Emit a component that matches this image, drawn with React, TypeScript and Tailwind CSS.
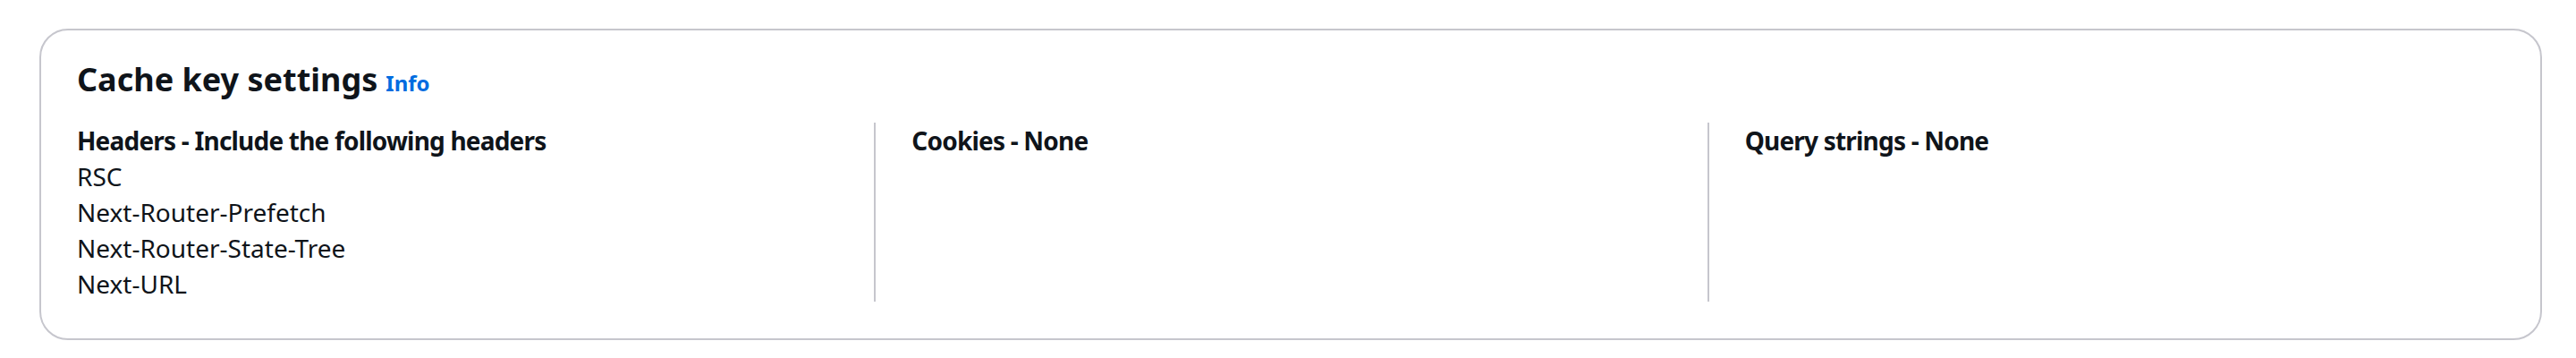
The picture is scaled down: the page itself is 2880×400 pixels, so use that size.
import React from 'react';

const headers = ['RSC', 'Next-Router-Prefetch', 'Next-Router-State-Tree', 'Next-URL'];

const App = () => {
  return (
    <div className="min-h-screen bg-white pt-[32px] pl-[44px] pr-[38px] text-[#0f141a]" style={{ fontFamily: '"Noto Sans", "Open Sans", sans-serif' }}>
      {/* Cache key settings container */}
      <div className="border-2 border-[#c6c6cd] rounded-[32px] pt-[31px] px-[40px] pb-[39px] h-[348px]">
        <h2 className="flex items-baseline text-[36px] leading-[48px] font-bold">
          Cache key settings
          <a className="ml-[9px] text-[24px] font-bold text-[#006ce0]">Info</a>
        </h2>
        <div className="mt-[20px] -mx-[40px] grid grid-cols-3 text-[28px] leading-[40px]">
          <div className="px-[40px]">
            <div className="font-bold tracking-[-0.8px]">Headers - Include the following headers</div>
            {headers.map((h) => (
              <div key={h}>{h}</div>
            ))}
          </div>
          <div className="px-[40px] border-l-2 border-[#c6c6cd]">
            <div className="font-bold tracking-[-0.8px]">Cookies - None</div>
          </div>
          <div className="px-[40px] border-l-2 border-[#c6c6cd]">
            <div className="font-bold tracking-[-0.8px]">Query strings - None</div>
          </div>
        </div>
      </div>
    </div>
  );
};

export default App;
